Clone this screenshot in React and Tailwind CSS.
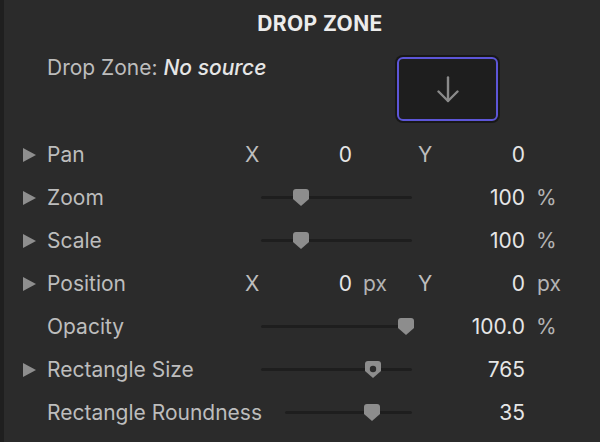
const Triangle = () => (
  <svg width="13" height="14" viewBox="0 0 13 14" className="block">
    <path d="M0 0 L13 7 L0 14 Z" fill="#8e8e8e" />
  </svg>
);

const Thumb = ({ dot }) => (
  <svg width="16" height="17" viewBox="0 0 16 17" className="block">
    <path d="M3 0 H13 Q16 0 16 3 V10 L8 17 L0 10 V3 Q0 0 3 0 Z" fill="#8d8d8d" />
    {dot && <circle cx="8" cy="8" r="3.2" fill="#2a2a2a" />}
  </svg>
);

const Slider = ({ width, pos, dot }) => (
  <div className="relative h-[17px]" style={{ width }}>
    <div className="absolute left-0 right-0 top-[7px] h-[3px] bg-[#1e1e1e] rounded-full" />
    <div className="absolute top-0" style={{ left: pos - 8 }}>
      <Thumb dot={dot} />
    </div>
  </div>
);

const Row = ({ toggle, label, children }) => (
  <div className="flex h-[43px] items-center">
    <div className="w-[24px] ml-[23px] flex items-center">{toggle && <Triangle />}</div>
    <div className="w-[198px] text-[#bdbdbd] whitespace-nowrap">{label}</div>
    {children}
  </div>
);

const XYRow = ({ label, unit }) => (
  <Row toggle label={label}>
    <span className="w-[60px] text-[#bdbdbd]">X</span>
    <span className="w-[47px] text-right text-[#e6e6e6]">0</span>
    <span className="w-[55px] ml-[11px] text-[#b4b4b4]">{unit}</span>
    <span className="w-[60px] text-[#bdbdbd]">Y</span>
    <span className="w-[47px] text-right text-[#e6e6e6]">0</span>
    <span className="ml-[12px] text-[#b4b4b4]">{unit}</span>
  </Row>
);

const SliderRow = ({ toggle, label, start = 16, width = 151, pos, dot, value, unit }) => (
  <Row toggle={toggle} label={label}>
    <div className="flex items-center" style={{ marginLeft: start }}>
      <Slider width={width} pos={pos} dot={dot} />
    </div>
    <span className="w-[113px] text-right text-[#e6e6e6]">{value}</span>
    {unit && <span className="ml-[11px] text-[#b4b4b4]">{unit}</span>}
  </Row>
);

export default function App() {
  return (
    <div
      className="w-[600px] h-[442px] bg-[#2b2b2b] flex overflow-hidden text-[21px] leading-[24px]"
      style={{ fontFamily: 'Inter, "Noto Sans", sans-serif' }}
    >
      <div className="w-[4px] bg-[#1f1f1f]" />
      <div className="flex-1 -ml-[4px]">
        <div className="h-[48px] flex items-center justify-center pl-[40px] text-[21px] font-bold text-[#ececec] tracking-[0.4px]">
          DROP ZONE
        </div>
        <div className="flex pt-[9px] pb-[12px]">
          <div className="w-[397px] pl-[47px] text-[#bdbdbd] leading-[22px] whitespace-nowrap">
            Drop Zone: <span className="italic font-medium text-[#e6e6e6]">No source</span>
          </div>
          <div className="w-[101px] h-[64px] rounded-[6px] border-2 border-[#5d56d8] bg-[#1e1e1e] shadow-[0_0_0_2px_#181818] flex items-center justify-center">
            <svg width="22" height="27" viewBox="0 0 22 27" fill="none" stroke="#8a8a8a" strokeWidth="2.4" strokeLinecap="round" strokeLinejoin="round">
              <path d="M11 1.5 V25" />
              <path d="M1.5 15.5 L11 25 L20.5 15.5" />
            </svg>
          </div>
        </div>
        <XYRow label="Pan" unit="" />
        <SliderRow toggle label="Zoom" pos={40} value="100" unit="%" />
        <SliderRow toggle label="Scale" pos={40} value="100" unit="%" />
        <XYRow label="Position" unit="px" />
        <SliderRow label="Opacity" pos={145} value="100.0" unit="%" />
        <SliderRow toggle label="Rectangle Size" pos={112} dot value="765" />
        <SliderRow label="Rectangle Roundness" start={40} width={127} pos={87} value="35" />
      </div>
    </div>
  );
}
